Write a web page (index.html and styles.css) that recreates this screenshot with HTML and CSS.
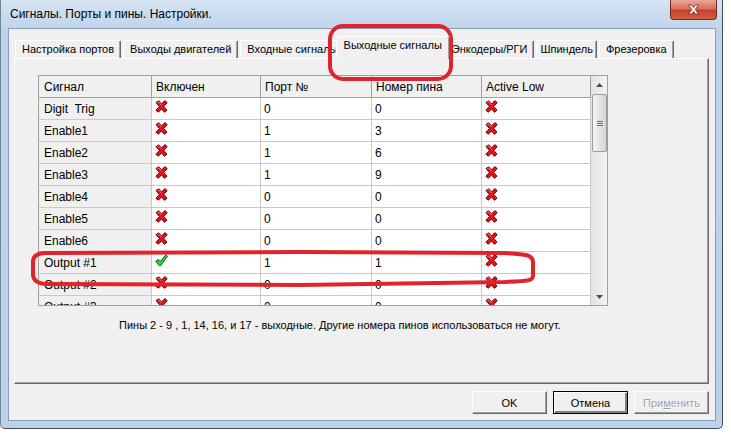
FILE: index.html
```html
<!DOCTYPE html>
<html>

<head lang="ru">
    <meta charset="UTF-8">
    <title>Сигналы. Порты и пины. Настройки.</title>
    <link rel="stylesheet" href="styles.css">
</head>

<body>
    <div class="window">
        <div class="titlebar">
            <span class="title">Сигналы. Порты и пины. Настройки.</span>
            <div class="close">
                <svg width="13" height="11" viewBox="0 0 13 11">
                    <path d="M1.5 1 L4.5 1 L6.5 3.6 L8.5 1 L11.5 1 L8.2 5.5 L11.5 10 L8.5 10 L6.5 7.4 L4.5 10 L1.5 10 L4.8 5.5 Z" fill="#fff" stroke="#6b2a22" stroke-width="0.8" />
                </svg>
            </div>
        </div>

        <div class="client">
            <!-- вкладки -->
            <div class="tabs">
                <div class="tab">Настройка портов</div>
                <div class="tab">Выходы двигателей</div>
                <div class="tab tab-cut">Входные сигналы</div>
                <div class="tab active">Выходные сигналы</div>
                <div class="tab tab-after">Энкодеры/РГИ</div>
                <div class="tab tab-narrow">Шпиндель</div>
                <div class="tab">Фрезеровка</div>
            </div>

            <div class="page">
                <div class="grid">
                    <div class="rows">
                        <div class="row head">
                            <div>Сигнал</div>
                            <div>Включен</div>
                            <div>Порт №</div>
                            <div>Номер пина</div>
                            <div>Active Low</div>
                        </div>
                        <div class="row">
                            <div class="name">Digit  Trig</div>
                            <div><svg class="ico"><use href="#no" /></svg></div>
                            <div>0</div>
                            <div>0</div>
                            <div><svg class="ico"><use href="#no" /></svg></div>
                        </div>
                        <div class="row">
                            <div class="name">Enable1</div>
                            <div><svg class="ico"><use href="#no" /></svg></div>
                            <div>1</div>
                            <div>3</div>
                            <div><svg class="ico"><use href="#no" /></svg></div>
                        </div>
                        <div class="row">
                            <div class="name">Enable2</div>
                            <div><svg class="ico"><use href="#no" /></svg></div>
                            <div>1</div>
                            <div>6</div>
                            <div><svg class="ico"><use href="#no" /></svg></div>
                        </div>
                        <div class="row">
                            <div class="name">Enable3</div>
                            <div><svg class="ico"><use href="#no" /></svg></div>
                            <div>1</div>
                            <div>9</div>
                            <div><svg class="ico"><use href="#no" /></svg></div>
                        </div>
                        <div class="row">
                            <div class="name">Enable4</div>
                            <div><svg class="ico"><use href="#no" /></svg></div>
                            <div>0</div>
                            <div>0</div>
                            <div><svg class="ico"><use href="#no" /></svg></div>
                        </div>
                        <div class="row">
                            <div class="name">Enable5</div>
                            <div><svg class="ico"><use href="#no" /></svg></div>
                            <div>0</div>
                            <div>0</div>
                            <div><svg class="ico"><use href="#no" /></svg></div>
                        </div>
                        <div class="row">
                            <div class="name">Enable6</div>
                            <div><svg class="ico"><use href="#no" /></svg></div>
                            <div>0</div>
                            <div>0</div>
                            <div><svg class="ico"><use href="#no" /></svg></div>
                        </div>
                        <div class="row">
                            <div class="name">Output #1</div>
                            <div><svg class="ico"><use href="#yes" /></svg></div>
                            <div>1</div>
                            <div>1</div>
                            <div><svg class="ico"><use href="#no" /></svg></div>
                        </div>
                        <div class="row">
                            <div class="name">Output #2</div>
                            <div><svg class="ico"><use href="#no" /></svg></div>
                            <div>0</div>
                            <div>0</div>
                            <div><svg class="ico"><use href="#no" /></svg></div>
                        </div>
                        <div class="row">
                            <div class="name">Output #3</div>
                            <div><svg class="ico"><use href="#no" /></svg></div>
                            <div>0</div>
                            <div>0</div>
                            <div><svg class="ico"><use href="#no" /></svg></div>
                        </div>
                    </div>

                    <!-- полоса прокрутки -->
                    <div class="scrollbar">
                        <div class="sb-btn">
                            <svg width="7" height="4" viewBox="0 0 7 4"><path d="M0 4 L3.5 0 L7 4 Z" fill="#4d4d4d" /></svg>
                        </div>
                        <div class="sb-track">
                            <div class="thumb"><span></span><span></span><span></span></div>
                        </div>
                        <div class="sb-btn">
                            <svg width="7" height="4" viewBox="0 0 7 4"><path d="M0 0 L3.5 4 L7 0 Z" fill="#4d4d4d" /></svg>
                        </div>
                    </div>
                </div>

                <p class="note">Пины 2 - 9 , 1, 14, 16, и 17 - выходные. Другие номера пинов использоваться не могут.</p>
            </div>

            <div class="buttons">
                <button class="btn">OK</button>
                <button class="btn default">Отмена</button>
                <button class="btn disabled">При<u>м</u>енить</button>
            </div>
        </div>

        <!-- красные пометки поверх окна -->
        <svg class="marks" width="731" height="442" viewBox="0 0 731 442">
            <rect x="330" y="26" width="121" height="53" rx="13" fill="none" stroke="#e1232b" stroke-width="4" />
            <path d="M46 253 L300 252 L505 253 C526 254 533 255 533 262 L533 276 C533 281 526 281 505 282 L300 285 L48 284 C38 284 33 281 33 274 L33 262 C33 256 38 253 46 253 Z" fill="none" stroke="#e1232b" stroke-width="4" />
        </svg>
    </div>

    <svg width="0" height="0" class="defs">
        <symbol id="no" viewBox="0 0 13 13">
            <path d="M1 2.5 L3.8 0.8 L6.6 4 L9.8 0.6 L12.2 2.6 L8.8 6.4 L12 10.2 L9.4 12.3 L6.5 8.9 L3.4 12.2 L0.9 10.3 L4.4 6.5 Z" fill="#e3141c" stroke="#5c0a0a" stroke-width="1" stroke-linejoin="round" />
            <path d="M2.3 2.6 L3.7 1.8 L6.5 5" fill="none" stroke="#f58a8a" stroke-width="0.9" />
        </symbol>
        <symbol id="yes" viewBox="0 0 13 13">
            <path d="M0.8 7.2 L3.2 5.4 L5.2 7.6 L10.8 0.8 L12.4 2.2 L5.6 11.8 L4.4 11.8 Z" fill="#3fd23a" stroke="#0b5a12" stroke-width="1" stroke-linejoin="round" />
        </symbol>
    </svg>
</body>

</html>
```

FILE: styles.css
```css
/* reset */
* {
    box-sizing: border-box;
}

body,
p {
    margin: 0;
    padding: 0;
}

body {
    background: #fff;
    font: 11px "Liberation Sans", Arial, sans-serif;
    color: #000;
}

.defs {
    position: absolute;
}

/* окно */
.window {
    position: relative;
    width: 723px;
    height: 429px;
    background: linear-gradient(#d7e4f3, #bed3eb 30px, #bcd2ea);
    border-right: 1px solid #3f4c5c;
    border-bottom: 1px solid #3f4c5c;
    border-left: 1px solid #6f849c;
    border-radius: 0 0 5px 5px;
}

.titlebar {
    height: 28px;
    display: flex;
    align-items: center;
    justify-content: space-between;
    padding-left: 9px;
}

.title {
    font-size: 12px;
    color: #000;
}

.close {
    align-self: flex-start;
    width: 47px;
    height: 20px;
    margin-right: 5px;
    border: 1px solid #7b2a20;
    border-top: 0;
    border-radius: 0 0 4px 4px;
    background: linear-gradient(#e9a899, #d9705c 45%, #c2412c 55%, #d2613f);
    display: flex;
    align-items: center;
    justify-content: center;
}

.client {
    width: 708px;
    height: 393px;
    margin-left: 7px;
    background: #f0f0f0;
    border: 1px solid #8a9db5;
}

/* вкладки */
.tabs {
    display: flex;
    align-items: flex-end;
    height: 29px;
    padding-left: 6px;
}

.tab {
    height: 18px;
    line-height: 16px;
    padding: 0 6px;
    margin-right: 2px;
    font-size: 11px;
    white-space: nowrap;
    border-top: 1px solid #fff;
    border-left: 1px solid #fff;
    border-right: 1px solid #696969;
    border-radius: 2px 2px 0 0;
    box-shadow: inset -1px 0 0 #a0a0a0;
}

.tab-cut {
    padding-right: 2px;
}

.tab.active {
    position: relative;
    z-index: 2;
    height: 23px;
    margin: 0 -2px -1px -7px;
    padding: 1px 7px 0;
    line-height: 14px;
    background: #f0f0f0;
}

.tab-after {
    padding-left: 3px;
}

.tab-narrow {
    padding: 0 3px;
}

.page {
    width: 695px;
    height: 326px;
    margin-left: 5px;
    padding: 16px 0 0 23px;
    border: 1px solid;
    border-color: #fff #696969 #696969 #fff;
    box-shadow: inset -1px -1px 0 #a0a0a0;
}

/* таблица */
.grid {
    display: flex;
    width: 570px;
    height: 231px;
    border: 1px solid #a0a0a0;
    background: #fff;
}

.rows {
    width: 552px;
    overflow: hidden;
}

.row {
    display: grid;
    grid-template-columns: 113px 109px 111px 110px 109px;
    height: 22px;
    font-size: 12px;
}

.row > div {
    height: 22px;
    padding: 1px 0 0 3px;
    line-height: 20px;
    border-right: 1px solid #c9c9c9;
    border-bottom: 1px solid #c9c9c9;
    white-space: pre;
}

.row > .name {
    padding-left: 5px;
    background: #f0f0f0;
}

.row.head > div {
    padding-left: 4px;
    background: #f0f0f0;
    border-color: #a0a0a0;
}

.row.head > div:first-child {
    padding-left: 5px;
}

.ico {
    display: block;
    width: 13px;
    height: 13px;
    margin-top: 1px;
}

.scrollbar {
    width: 16px;
    display: flex;
    flex-direction: column;
    background: linear-gradient(90deg, #e3e3e3, #f3f3f3);
}

.sb-btn {
    height: 17px;
    display: flex;
    align-items: center;
    justify-content: center;
}

.sb-track {
    flex: 1;
    padding-top: 1px;
}

.thumb {
    width: 15px;
    height: 58px;
    margin-left: 1px;
    border: 1px solid #9b9b9b;
    border-radius: 2px;
    background: linear-gradient(90deg, #f4f4f4, #e4e4e4 50%, #d6d6d6);
    display: flex;
    flex-direction: column;
    align-items: center;
    justify-content: center;
    gap: 1px;
}

.thumb span {
    width: 6px;
    height: 1px;
    background: #6f6f6f;
}

.note {
    margin: 12px 0 0 81px;
    line-height: 14px;
    font-size: 11px;
}

/* кнопки */
.buttons {
    display: flex;
    justify-content: flex-end;
    gap: 6px;
    margin-top: 7px;
    padding-right: 6px;
}

.btn {
    width: 75px;
    height: 23px;
    padding: 0;
    font: 11px "Liberation Sans", Arial, sans-serif;
    color: #000;
    background: #f0f0f0;
    border: 1px solid;
    border-color: #fff #696969 #696969 #fff;
    box-shadow: inset -1px -1px 0 #a0a0a0;
}

.btn.default {
    border: 1px solid #000;
    box-shadow: inset 1px 1px 0 #fff, inset -2px -2px 0 #808080;
}

.btn.disabled {
    color: #a0a0a0;
    text-shadow: 1px 1px 0 #fff;
}

.marks {
    position: absolute;
    left: -1px;
    top: 0;
    pointer-events: none;
}
```
